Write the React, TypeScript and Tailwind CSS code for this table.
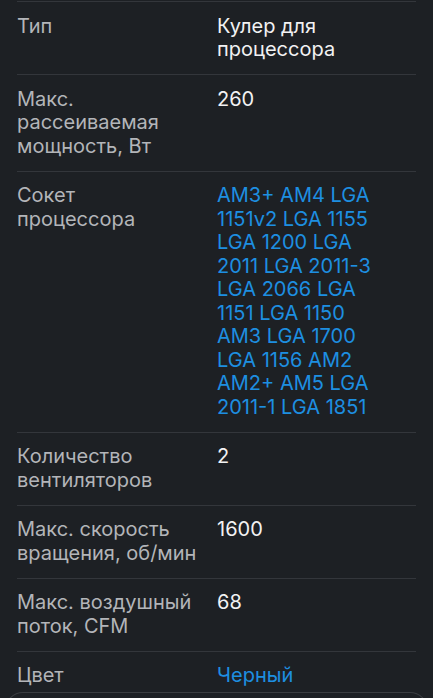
type Spec = {
  label: string[];
  value: string[];
  link?: boolean;
};

const specs: Spec[] = [
  { label: ["Тип"], value: ["Кулер для", "процессора"] },
  { label: ["Макс.", "рассеиваемая", "мощность, Вт"], value: ["260"] },
  {
    label: ["Сокет", "процессора"],
    value: [
      "AM3+ AM4 LGA",
      "1151v2 LGA 1155",
      "LGA 1200 LGA",
      "2011 LGA 2011-3",
      "LGA 2066 LGA",
      "1151 LGA 1150",
      "AM3 LGA 1700",
      "LGA 1156 AM2",
      "AM2+ AM5 LGA",
      "2011-1 LGA 1851",
    ],
    link: true,
  },
  { label: ["Количество", "вентиляторов"], value: ["2"] },
  { label: ["Макс. скорость", "вращения, об/мин"], value: ["1600"] },
  { label: ["Макс. воздушный", "поток, CFM"], value: ["68"] },
  { label: ["Цвет"], value: ["Черный"], link: true },
];

function SpecRow({ label, value, link, last }: Spec & { last?: boolean }) {
  return (
    <div
      className={`grid grid-cols-[200px_1fr] border-t border-[#33363b] pt-[12.5px] leading-[23.5px] ${
        last ? "pb-[4px]" : "pb-[12.5px]"
      }`}
    >
      <div className="text-[#b3b5b9]">
        {label.map((l) => (
          <div key={l}>{l}</div>
        ))}
      </div>
      <div className={link ? "text-[#1d8fe1]" : "text-[#f2f2f3]"}>
        {value.map((v) => (
          <div key={v}>{v}</div>
        ))}
      </div>
    </div>
  );
}

export default function App() {
  return (
    <div
      className="h-[698px] w-full overflow-hidden bg-[#1d2024] pt-px text-[20px]"
      style={{ fontFamily: "Inter, 'Noto Sans', sans-serif" }}
    >
      <div className="px-[17px]">
        {specs.map((s, i) => (
          <SpecRow key={s.label.join(" ")} {...s} last={i === specs.length - 1} />
        ))}
      </div>
      {/* следующая карточка, обрезана снизу */}
      <div className="mx-[5px] h-[40px] rounded-t-[18px] border border-b-0 border-[#3a3d41] bg-[#1d2024]" />
    </div>
  );
}
